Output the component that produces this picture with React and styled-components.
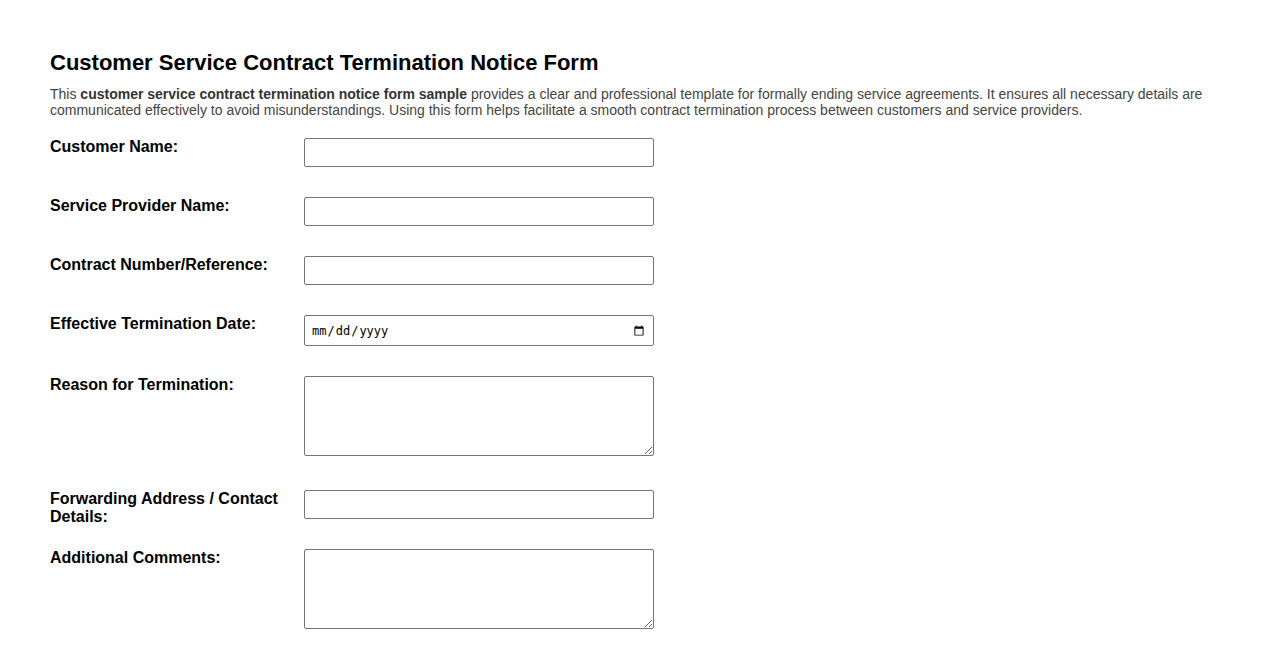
import React from "react";
import styled, { createGlobalStyle } from "styled-components";

const Global = createGlobalStyle`
  html, body { margin: 0; padding: 0; background: #fff; }
  body { font-family: "Liberation Sans", Arial, sans-serif; color: #000; }
`;

const Page = styled.div`
  padding: 50px 50px 20px 50px;
`;

const Title = styled.h1`
  font-size: 22px;
  font-weight: bold;
  line-height: 25px;
  margin: 0 0 11px 0;
  color: #000;
`;

const Intro = styled.p`
  font-size: 14px;
  line-height: 16px;
  color: #444;
  margin: 0 0 20px 0;
  strong { color: #333; }
`;

const Form = styled.form`
  display: flex;
  flex-direction: column;
`;

const Row = styled.div`
  display: flex;
  align-items: flex-start;
  height: ${(p) => p.$h}px;
  margin-bottom: ${(p) => (p.$tall ? "34px" : "30px")};
`;

const Label = styled.label`
  flex: 0 0 254px;
  font-size: 16px;
  line-height: 18px;
  font-weight: bold;
`;

const fieldBase = `
  box-sizing: border-box;
  width: 350px;
  flex: 0 0 350px;
  border: 1px solid #767676;
  border-radius: 2px;
  background: #fff;
  margin: 0;
  font-family: "Liberation Sans", Arial, sans-serif;
  font-size: 13px;
`;

const TextInput = styled.input`
  ${fieldBase}
  height: 29px;
  padding: 4px 6px;
`;

const DateInput = styled.input`
  ${fieldBase}
  height: 31px;
  padding: 4px 6px;
  font-family: "DejaVu Sans Mono", monospace;
  font-size: 12px;
`;

const TextArea = styled.textarea`
  ${fieldBase}
  height: 80px;
  padding: 4px 6px;
  resize: both;
  display: block;
`;

const fields = [
  { label: "Customer Name:", kind: "text" },
  { label: "Service Provider Name:", kind: "text" },
  { label: "Contract Number/Reference:", kind: "text" },
  { label: "Effective Termination Date:", kind: "date" },
  { label: "Reason for Termination:", kind: "area" },
  { label: "Forwarding Address / Contact Details:", kind: "text" },
  { label: "Additional Comments:", kind: "area" },
];

const heights = { text: 29, date: 31, area: 80 };

export default function App() {
  return (
    <>
      <Global />
      <Page>
        <Title>Customer Service Contract Termination Notice Form</Title>
        <Intro>
          This <strong>customer service contract termination notice form sample</strong> provides a
          clear and professional template for formally ending service agreements. It ensures all
          necessary details are communicated effectively to avoid misunderstandings. Using this form
          helps facilitate a smooth contract termination process between customers and service
          providers.
        </Intro>
        <Form>
          {fields.map((f, i) => (
            <Row key={i} $h={heights[f.kind]} $tall={f.kind === "area"}>
              <Label htmlFor={`f${i}`}>{f.label}</Label>
              {f.kind === "text" && <TextInput id={`f${i}`} type="text" />}
              {f.kind === "date" && <DateInput id={`f${i}`} type="date" />}
              {f.kind === "area" && <TextArea id={`f${i}`} />}
            </Row>
          ))}
        </Form>
      </Page>
    </>
  );
}
